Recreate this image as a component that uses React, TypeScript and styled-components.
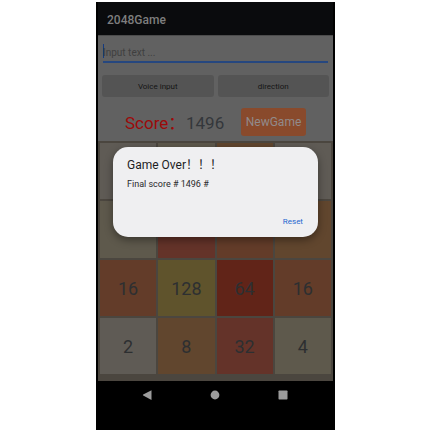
import React from "react";
import styled, { createGlobalStyle } from "styled-components";

const GlobalStyle = createGlobalStyle`
  * { box-sizing: border-box; }
  body { margin: 0; background: #fff; font-family: Roboto, "Noto Sans CJK SC", sans-serif; }
  button, input { font-family: inherit; }
`;

const Page = styled.main`
  display: flex;
  min-height: 100vh;
  padding: 2px 97px 2px 96px;
`;

const Phone = styled.div`
  position: relative;
  flex: 1;
  display: flex;
  flex-direction: column;
  padding: 0 2px;
  background: #000;
`;

const AppBar = styled.header`
  display: flex;
  align-items: center;
  height: 33px;
  padding: 2px 9px 0;
  background: #0a0b0d;
`;

const AppTitle = styled.h1`
  margin: 0;
  font-size: 12px;
  font-weight: 500;
  line-height: 16px;
  color: #7e7e7e;
`;

const Content = styled.section`
  display: flex;
  flex-direction: column;
  padding-top: 5px;
  border-top: 1px solid #4c4c4c;
  background: #616161;
`;

const FieldRow = styled.label`
  display: flex;
  align-items: center;
  margin: 0 5px;
  height: 22px;
  border-bottom: 2px solid #26477f;
`;

const Caret = styled.span`
  width: 1px;
  height: 14px;
  margin-right: -1px;
  background: #143a80;
`;

const TextField = styled.input`
  flex: 1;
  min-width: 0;
  padding: 3px 0 0;
  border: 0;
  outline: 0;
  background: transparent;
  font-size: 10px;
  line-height: 16px;
  color: #222;
  &::placeholder { color: #3f3f3f; opacity: 1; }
`;

const ButtonRow = styled.div`
  display: grid;
  grid-template-columns: 1fr 1fr;
  gap: 4px;
  margin: 12px 4px 0;
`;

const GreyButton = styled.button`
  height: 22px;
  padding: 0;
  border: 0;
  border-radius: 3px;
  background: #545454;
  font-size: 8px;
  color: #151515;
`;

const ScoreRow = styled.div`
  display: flex;
  align-items: center;
  height: 44px;
  padding: 6px 27px 0 27px;
`;

const ScoreLabel = styled.span`
  width: 61px;
  padding-top: 2px;
  font-size: 17px;
  line-height: 24px;
  color: #9c0a0a;
  white-space: nowrap;
`;

const ScoreValue = styled.output`
  flex: 1;
  padding-top: 2px;
  font-size: 17px;
  line-height: 24px;
  color: #34373b;
`;

const NewGameButton = styled.button`
  width: 65px;
  height: 28px;
  padding: 0;
  border: 0;
  border-radius: 3px;
  background: #894a2c;
  font-size: 12px;
  color: #918b8b;
`;

const Board = styled.div`
  display: grid;
  grid-template-columns: repeat(4, 1fr);
  gap: 2px;
  padding: 2px 2px 7px;
  background: #4b463f;
`;

const tileColors: Record<number, string> = {
  2: "#5f5b55",
  4: "#5e594c",
  8: "#61462e",
  16: "#633c29",
  32: "#643329",
  64: "#612418",
  128: "#5f532c",
};

const Tile = styled.div<{ $value: number }>`
  display: flex;
  align-items: center;
  justify-content: center;
  aspect-ratio: 1;
  padding-top: 3px;
  background: ${(p) => tileColors[p.$value]};
  font-size: 18px;
  line-height: 24px;
  color: #2d2f31;
`;

const NavBar = styled.nav`
  display: flex;
  justify-content: space-between;
  padding: 7px 43px 0 42px;
`;

const NavButton = styled.button`
  display: flex;
  padding: 0;
  border: 0;
  background: none;
  color: #9c9c9c;
`;

const Overlay = styled.div`
  position: absolute;
  inset: 145px 17px auto;
`;

const Dialog = styled.section`
  display: flex;
  flex-direction: column;
  height: 90px;
  padding: 9px 14px 8px;
  border-radius: 15px;
  background: #efeff1;
  box-shadow: 0 3px 9px rgba(0, 0, 0, 0.4);
`;

const DialogTitle = styled.h2`
  margin: 0;
  font-size: 12px;
  font-weight: 400;
  line-height: 18px;
  color: #1d1d1f;
`;

const DialogText = styled.p`
  margin: 3px 0 0;
  font-size: 9px;
  line-height: 14px;
  color: #29292b;
`;

const ResetButton = styled.button`
  align-self: flex-end;
  margin-top: auto;
  padding: 0 1px;
  border: 0;
  background: none;
  font-size: 8px;
  line-height: 14px;
  color: #2767d0;
`;

const board = [2, 4, 8, 2, 4, 32, 16, 8, 16, 128, 64, 16, 2, 8, 32, 4];

// The dialog lies over the numbers of the first two rows.
const coveredTiles = 8;

export default function App() {
  return (
    <>
      <GlobalStyle />
      <Page>
        <Phone>
          <AppBar>
            <AppTitle>2048Game</AppTitle>
          </AppBar>
          <Content>
            <FieldRow>
              <Caret />
              <TextField type="text" aria-label="Input text" placeholder="Input text ..." />
            </FieldRow>
            <ButtonRow>
              <GreyButton type="button">Voice input</GreyButton>
              <GreyButton type="button">direction</GreyButton>
            </ButtonRow>
            <ScoreRow>
              <ScoreLabel>Score：</ScoreLabel>
              <ScoreValue>1496</ScoreValue>
              <NewGameButton type="button">NewGame</NewGameButton>
            </ScoreRow>
            <Board>
              {board.map((value, i) => (
                <Tile key={i} $value={value}>{i >= coveredTiles && value}</Tile>
              ))}
            </Board>
          </Content>
          <NavBar>
            <NavButton type="button" aria-label="Back">
              <svg width="14" height="14" viewBox="0 0 14 14">
                <path d="M11.5 2.2v9.8L3.2 7.5q-.8-.5 0-1z" fill="currentColor" />
              </svg>
            </NavButton>
            <NavButton type="button" aria-label="Home">
              <svg width="14" height="14" viewBox="0 0 14 14">
                <circle cx="7" cy="7" r="4.4" fill="currentColor" />
              </svg>
            </NavButton>
            <NavButton type="button" aria-label="Recent apps">
              <svg width="14" height="14" viewBox="0 0 14 14">
                <rect x="2.5" y="2.5" width="9" height="9" rx=".7" fill="currentColor" />
              </svg>
            </NavButton>
          </NavBar>
          <Overlay>
            <Dialog role="dialog" aria-labelledby="dialog-title">
              <DialogTitle id="dialog-title">Game Over！！！</DialogTitle>
              <DialogText>Final score # 1496 #</DialogText>
              <ResetButton type="button">Reset</ResetButton>
            </Dialog>
          </Overlay>
        </Phone>
      </Page>
    </>
  );
}
